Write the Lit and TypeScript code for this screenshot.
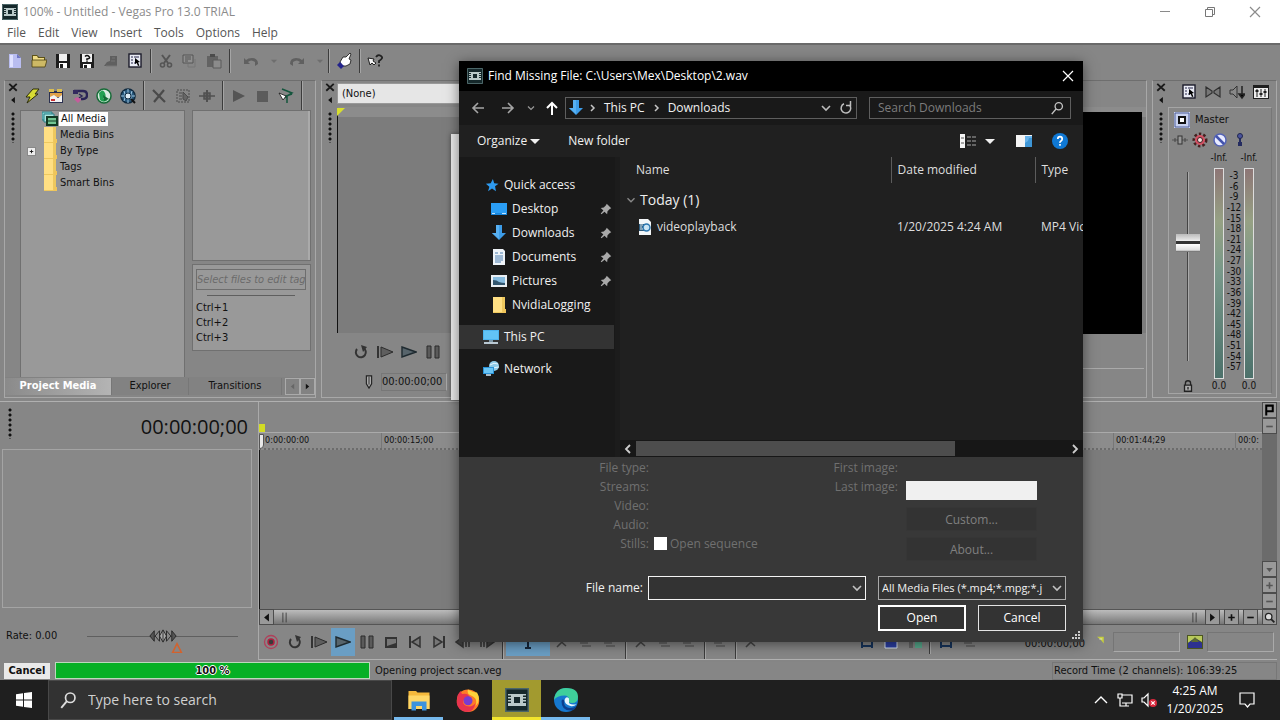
import { LitElement, html, svg, css, nothing, SVGTemplateResult } from "lit";
import { customElement } from "lit/decorators.js";
import { classMap } from "lit/directives/class-map.js";

const glyphs: Record<string, SVGTemplateResult> = {
  app: svg`<rect x="0" y="0" width="16" height="16" fill="#15282b"/><rect x="2" y="4" width="12" height="8" fill="#b9c9c9"/><rect x="6" y="6" width="4" height="4" fill="#15282b"/><path d="M2 5h2v1H2zM2 7h2v1H2zM2 9h2v1H2zM12 5h2v1h-2zM12 7h2v1h-2zM12 9h2v1h-2z" fill="#15282b"/><path d="M.5.5h15v15H.5z" fill="none" stroke="#4c6668"/>`,
  newFile: svg`<path d="M2 1h8l4 4v10H2z" fill="#b9bdf0"/><path d="M10 1l4 4h-4z" fill="#6f76c4"/><path d="M3 2h3v12H3z" fill="#dfe1ff"/>`,
  open: svg`<path d="M1 2h5l2 2h6v10H1z" fill="#5d5218"/><path d="M2 3h4l1 2h6v3H2z" fill="#f0dc86"/><path d="M1 14V7h15l-2 7z" fill="#cdb965" stroke="#4a3f10" stroke-width=".8"/>`,
  save: svg`<path d="M1 1h14v14H1z" fill="#1d1d1d"/><path d="M4 1h8v7H4z" fill="#f2f2f2"/><path d="M4 10h8v5H4z" fill="#fff"/><path d="M5 11h3v4H5z" fill="#1d1d1d"/>`,
  saveAs: svg`<path d="M1 1h14v14H1z" fill="#1d1d1d"/><path d="M3 1h10v8H3z" fill="#f2f2f2"/><path d="M4 11h8v4H4z" fill="#fff"/><path d="M5 12h3v3H5z" fill="#1d1d1d"/><path d="M6 3.5q2-2 4 0t-2 2.5v1M8 7.5v1.2" fill="none" stroke="#111" stroke-width="1.6"/>`,
  render: svg`<path d="M1 13l3-4 3-1V3h7v10z" fill="#5f5f5f"/><path d="M3 13h11M9 5h3M8 8h4" stroke="#777" fill="none"/>`,
  props: svg`<rect x="2" y="1" width="12" height="13" fill="#e9ebf4" stroke="#1a1a2a" stroke-width="1.4"/><path d="M4 4h2M4 7h2M4 10h2M7 4h5M7 10h2" stroke="#26264a"/><path d="M8 5l5 4-2 .5 1.5 3-1.5.5-1.3-3L8 11z" fill="#000"/>`,
  cut: svg`<path d="M4 2l6 8M12 2L6 10" stroke="#555" stroke-width="2" fill="none"/><circle cx="4.500" cy="12" r="2" fill="none" stroke="#555" stroke-width="1.6"/><circle cx="11.500" cy="12" r="2" fill="none" stroke="#555" stroke-width="1.6"/>`,
  copy: svg`<path d="M1 2h10v8H1z" fill="#8f8f8f" stroke="#555"/><path d="M3 4h6M3 6h6M3 8h3" stroke="#555"/><path d="M13 6v8H6v-3" fill="none" stroke="#767676"/>`,
  paste: svg`<path d="M1 3h11v11H1z" fill="#636363"/><path d="M4 1h5v3H4z" fill="#4b4b4b"/><path d="M7 7h8v8H7z" fill="#8b8b8b" stroke="#5b5b5b"/>`,
  undo: svg`<path d="M1 5v6h6L5 9q3-3 7 0v4l3-2q0-6-6-6-4 0-6 2z" fill="#606060"/>`,
  redo: svg`<path d="M15 5v6H9l2-2q-3-3-7 0v4l-3-2q0-6 6-6 4 0 6 2z" fill="#606060"/>`,
  caret: svg`<path d="M3 6h10l-5 5z" fill="currentColor"/>`,
  hand: svg`<path d="M4 9l3-5 3 0 4-4 1 1-2 5 2 1-1 4-4 2H6z" fill="#fff" stroke="#222" stroke-width=".9"/><path d="M1 12l3-3 4 4-3 3z" fill="#23238c"/>`,
  what: svg`<path d="M1 5l6 1-1 2 3 2-2 2-2-2-2 2z" fill="#f4f4f4" stroke="#111" stroke-width=".9"/><path d="M9 4q2-3 5-1t-2 5v2M12 11.500v2" fill="none" stroke="#222" stroke-width="1.800"/>`,
  bolt: svg`<path d="M9 1h6l-4 5h3L3 15l3-6H2z" fill="#d9dc35" stroke="#2b2b0a"/>`,
  photo: svg`<path d="M1 3h14v12H1z" fill="#2a3050"/><path d="M2 5h12v4H2z" fill="#e0a24a"/><path d="M2 9l4-2 4 3 4-3v7H2z" fill="#f3f3f3"/><path d="M3 11h4v2H3z" fill="#c33"/><path d="M1 1h5v3H1zM9 1h5v3H9z" fill="#d9bd52"/>`,
  device: svg`<path d="M2 3h9q4 0 4 4t-4 4H9" fill="none" stroke="#2a2456" stroke-width="2.400"/><path d="M1 2h5v4H1z" fill="#332a5e"/><path d="M7 6l3 2-3 2" fill="none" stroke="#2a2456" stroke-width="1.500"/><path d="M2 11q4-4 7 1l-3 3z" fill="#c55c9c"/>`,
  globe: svg`<circle cx="8" cy="8" r="7" fill="#d9ebe0" stroke="#166b37" stroke-width="1.500"/><path d="M3 5q4-5 6 0t-2 5q4 4 6 1-5 5-9 1z" fill="#23a052"/><path d="M7 7l6 4-5 2z" fill="#126c34"/>`,
  web: svg`<circle cx="8" cy="8" r="7" fill="#28587c" stroke="#112b40" stroke-width="1.600"/><path d="M1 8h14M8 1v14M4 3q3 5 0 10M12 3q-3 5 0 10" stroke="#9fc7e2" fill="none"/><circle cx="8" cy="8" r="3" fill="#dcebf5" stroke="#112b40"/><path d="M11 11l4 4" stroke="#111" stroke-width="2"/>`,
  xdark: svg`<path d="M2 3l12 11M14 3L2 14" stroke="#1a1a1a" stroke-width="3"/>`,
  xgray: svg`<path d="M2 2l12 12M13 2L3 14" stroke="#4a4a4a" stroke-width="2.200"/>`,
  sheet: svg`<rect x="2" y="2" width="12" height="12" fill="none" stroke="#4c4c4c" stroke-dasharray="2 1"/><path d="M4 5h3M4 8h3M4 11h3M8 4l5 5-2 4-3-2z" stroke="#4c4c4c" fill="#666"/>`,
  plugin: svg`<path d="M0 8h16M5 5h6v6H5z" stroke="#505050" fill="#666" stroke-width="1.500"/><path d="M8 2v12" stroke="#505050" stroke-width="2"/>`,
  playGray: svg`<path d="M3 2l12 6-12 6z" fill="#555"/>`,
  stopGray: svg`<path d="M3 3h11v11H3z" fill="#5b5b5b"/>`,
  auto: svg`<path d="M4 1l10 4-8 5M5 9l9-3M9 7v8" stroke="#14553d" stroke-width="1.500" fill="none"/><path d="M1 5l7 3-3 4z" fill="#fff" stroke="#111" stroke-width=".8"/>`,
  loop: svg`<path d="M10.500 4A5 5 0 1 1 4 5" fill="none" stroke="#333" stroke-width="2"/><path d="M8 1l6 2-4 5z" fill="#333"/>`,
  playStart: svg`<path d="M1 2v12" stroke="#333" stroke-width="2"/><path d="M4 3l12 5-12 5z" fill="#5e5e5e" stroke="#2c2c2c"/>`,
  play: svg`<path d="M1 3l14 5-14 5z" fill="#57646b" stroke="#1e2a30" stroke-width="1.400"/>`,
  pause: svg`<path d="M2 2h4v12H2zM10 2h4v12h-4z" fill="#5a5a5a" stroke="#2a2a2a"/>`,
  stop: svg`<path d="M2 3h12v11H2z" fill="#333"/><path d="M4 5h9v4l-9 3z" fill="#777"/>`,
  prev: svg`<path d="M3 2v12" stroke="#333" stroke-width="2"/><path d="M13 3L5 8l8 5z" fill="#777" stroke="#333" stroke-width="1.500"/>`,
  next: svg`<path d="M13 2v12" stroke="#333" stroke-width="2"/><path d="M3 3l8 5-8 5z" fill="#777" stroke="#333" stroke-width="1.500"/>`,
  record: svg`<circle cx="8" cy="8" r="6.500" fill="none" stroke="#b0405a" stroke-width="1.300"/><circle cx="8" cy="8" r="3" fill="#3a3a3a" stroke="#b02040" stroke-width="1.500"/>`,
  frameBack: svg`<path d="M8 3L1 8l7 5zM11 3v10M14 3v10" fill="#444" stroke="#333" stroke-width="1.500"/>`,
  frameFwd: svg`<path d="M8 3l7 5-7 5zM2 3v10M5 3v10" fill="#444" stroke="#333" stroke-width="1.500"/>`,
  cursor: svg`<path d="M8 2v12M5 14h6M5 2h6" stroke="#16263a" stroke-width="2"/>`,
  tool: svg`<path d="M3 4l9 8M12 4l-9 9" stroke="#444" stroke-width="1.600"/>`,
  lines: svg`<path d="M2 5h12M2 9h8M4 12h9" stroke="#606060" stroke-width="1.500"/>`,
  snap: svg`<path d="M3 14V7l5-5 5 5v7M3 12h10" stroke="#16345c" stroke-width="2" fill="none"/>`,
  blue: svg`<path d="M2 5h12v9H2z" fill="#2a3ea4" stroke="#d8e4f0"/>`,
  green: svg`<path d="M2 7h4v7H2z" fill="#666"/><path d="M8 5h7v9H8z" fill="#57a98c"/>`,
  mixer: svg`<path d="M0 1h16v14H0z" fill="#1f1f1f"/><path d="M1 4h14v10H1z" fill="#eee"/><path d="M4 5v8M8 5v8M12 5v8" stroke="#1f1f1f"/><path d="M2.500 7h3M6.500 10h3M10.500 8h3" stroke="#1f1f1f" stroke-width="2"/>`,
  downmix: svg`<path d="M1 3l6 4v2l-6 4zM15 3L9 7v2l6 4z" fill="#777" stroke="#2f2f2f" stroke-width="1.200"/>`,
  dim: svg`<path d="M1 6h3l4-4v12L4 10H1z" fill="#888" stroke="#333"/><path d="M13 2v9M10 10l3 4 3-4z" stroke="#222" stroke-width="1.500"/>`,
  master: svg`<path d="M0 0h16v16H0z" fill="#c9d2ef"/><path d="M1 1h14v14H1z" fill="none" stroke="#4d5c96"/><path d="M5 5h6v6H5z" fill="#fff" stroke="#111" stroke-width="2"/>`,
  fx: svg`<path d="M0 8h16" stroke="#555"/><rect x="6" y="4" width="4" height="8" fill="#999" stroke="#333"/><path d="M3 6v4M13 6v4" stroke="#444"/>`,
  gear: svg`<circle cx="8" cy="8" r="6" fill="none" stroke="#452020" stroke-width="3" stroke-dasharray="2.400 2"/><circle cx="8" cy="8" r="5" fill="#d34f62"/><circle cx="8" cy="8" r="2.500" fill="#f3dede" stroke="#402020"/>`,
  mute: svg`<circle cx="8" cy="8" r="6" fill="#e8ebff" stroke="#5564b5" stroke-width="1.500"/><path d="M4 4l8 8" stroke="#4353ad" stroke-width="2.500"/>`,
  solo: svg`<path d="M8 2v12" stroke="#252c60" stroke-width="2"/><circle cx="8" cy="4" r="2.500" fill="#4a539c" stroke="#20264f"/><path d="M6 10h4v4H6z" fill="#252c60"/>`,
  lock: svg`<path d="M5 8V5a3 3 0 0 1 6 0v3" fill="none" stroke="#222" stroke-width="1.500"/><path d="M4 7h8v7H4z" fill="#aaa" stroke="#222" stroke-width="1.500"/><path d="M8 9v3" stroke="#222" stroke-width="1.500"/>`,
  media: svg`<path d="M0 1h10v8H0z" fill="#7fd0cf" stroke="#2a7f86"/><path d="M2 3h10v8H2z" fill="#a9e5e0" stroke="#2a7f86"/><path d="M4 5h12v10H4z" fill="#123a24"/><path d="M6 7h8v6H6z" fill="#72c592"/><path d="M6 10h8" stroke="#123a24"/>`,
  folder: svg`<path d="M2 0h12v16H2z" fill="#eec85e"/><path d="M2 0h9v15H2z" fill="#ffdf83"/><path d="M12 12h3v4h-3z" fill="#f0c55a"/>`,
  marker: svg`<path d="M5 1h6v9l-3 5-3-5z" fill="#aaa" stroke="#222" stroke-width="1.300"/><path d="M8 2v9" stroke="#222"/>`,
  gridRow: svg`<path d="M0 1h9v9l-4-5z" fill="#c6cf3c"/><path d="M3 4h4" stroke="#eee"/>`,
  image: svg`<path d="M0 1h16v14H0z" fill="#4b5520"/><path d="M1 2h14v6L8 4 1 9z" fill="#b8c95c"/><path d="M1 9l7-5 7 5v5H1z" fill="#2d3190"/><path d="M4 8l4-5 4 5z" fill="#5c6a30"/>`,
  back: svg`<path d="M14 8H3M8 3L3 8l5 5" fill="none" stroke="#a5a5a5" stroke-width="1.600"/>`,
  fwd: svg`<path d="M2 8h11M8 3l5 5-5 5" fill="none" stroke="#a5a5a5" stroke-width="1.600"/>`,
  up: svg`<path d="M8 15V3M3 8l5-5 5 5" fill="none" stroke="#fff" stroke-width="2"/>`,
  chevDown: svg`<path d="M4 6l4 4 4-4" fill="none" stroke="currentColor" stroke-width="1.600"/>`,
  chevRight: svg`<path d="M7 5l3 3-3 3" fill="none" stroke="currentColor" stroke-width="1.500"/>`,
  chevLeft: svg`<path d="M10 4L6 8l4 4" fill="none" stroke="currentColor" stroke-width="1.800"/>`,
  angle: svg`<path d="M6 4l4 4-4 4" fill="none" stroke="currentColor" stroke-width="1.800"/>`,
  refresh: svg`<path d="M6 3.800a4.800 4.800 0 1 0 5.500 1.200" fill="none" stroke="#bdbdbd" stroke-width="1.500"/><path d="M12.500 1v4.500H8" fill="none" stroke="#bdbdbd" stroke-width="1.500"/>`,
  search: svg`<circle cx="10" cy="6" r="4.200" fill="none" stroke="currentColor" stroke-width="1.500"/><path d="M7 9l-5 6" stroke="currentColor" stroke-width="1.700"/>`,
  download: svg`<path d="M5 0h6v8h4l-7 7-7-7h4z" fill="#3c9ce8"/><path d="M5 0h3v14L1 8h4z" fill="#57b0f2"/>`,
  star: svg`<path d="M9 1l1.500 5 5 .5-4 3 1 5.500-4.500-3-4.500 3 1.500-5-4-3.500 5.500-.5z" fill="#2e9bf0"/>`,
  desktop: svg`<path d="M0 2h16v12H0z" fill="#1987dd"/><path d="M0 2h16v10H0z" fill="#2a9df4"/><path d="M1 12h3v1H1zM11 12h4v1h-4z" fill="#bfe4ff"/>`,
  document: svg`<path d="M2 0h10l2 2v14H2z" fill="#eef3f8"/><path d="M4 4h3M4 7h8M4 9h8M4 11h8M4 13h6M9 4h3" stroke="#4c7fb0" stroke-width="1.200"/>`,
  picture: svg`<path d="M0 2h16v12H0z" fill="#e8eef3"/><path d="M2 4h12v8H2z" fill="#86bbdf"/><path d="M2 7q4 0 6 2 3 1 6 1v2H2z" fill="#32566f"/>`,
  pc: svg`<path d="M0 1h16v10H0z" fill="#4db4ee"/><path d="M1 2h14v8H1z" fill="#62c4f6"/><path d="M6 11h4v3H6z" fill="#7e98a8"/><path d="M1 13h14v2H1z" fill="#b9c8d2"/>`,
  network: svg`<circle cx="11" cy="5" r="5" fill="#8fcbe8"/><path d="M7 4q4-3 8-1M8 8q4-2 8-2" stroke="#e6f6ff" fill="none"/><path d="M0 6h11v7H0z" fill="#2a93d8"/><path d="M1 7h9v5H1z" fill="#6ac5f5"/><path d="M3 13h5v2H3z" fill="#a8bac5"/>`,
  pin: svg`<path d="M9 1l6 6-2 1-3 3-.5 4-3.500-3.500L2 15l-1-1 3.500-4L1 6.500 5 6l3-3z" fill="#a9a9a9"/>`,
  videoFile: svg`<path d="M2 0h9l3 3v13H2z" fill="#f3f6f8"/><path d="M2 5h9v7H2z" fill="#2c5878"/><circle cx="9.500" cy="8.500" r="3.500" fill="#c3e2f5" stroke="#2c76ae" stroke-width="1.500"/><path d="M9 6v5M3 6h3M3 8h2M3 10h3" stroke="#dce9f0"/>`,
  views: svg`<path d="M0 1h5v14H0z" fill="#f5f5f5"/><path d="M1 5h3M1 10h3" stroke="#555"/><path d="M7 4h4M12 4h4M7 8h4M12 8h4M7 12h4M12 12h4" stroke="#a8a8a8"/>`,
  pane: svg`<path d="M0 2h16v12H0z" fill="#f4f4f4"/><path d="M9 3h7v11H9z" fill="#66b2ea"/><path d="M9 10l3-2 1-3h3v9H9z" fill="#3e96d6"/>`,
  help: svg`<circle cx="8" cy="8" r="8" fill="#0f78d4"/><path d="M5.800 6q0-2.400 2.200-2.400T10.200 6q0 1.200-1.200 1.900T8 9.800M8 11v1.700" fill="none" stroke="#fff" stroke-width="1.700"/>`,
  win: svg`<path d="M0 2.300l7-1v6.200H0zM8 1.100L16 0v7.500H8zM0 8.500h7v6.200l-7-1zM8 8.500h8V16l-8-1.100z" fill="#fff"/>`,
  explorer: svg`<path d="M1 2h5l1 1h8v11H1z" fill="#f5b93c"/><path d="M1 5h14v9H1z" fill="#ffd767"/><path d="M3 15v-6h10v6h-3v-3H6v3z" fill="#3d93dd"/>`,
  firefox: svg`<circle cx="8" cy="8.500" r="7.500" fill="#ff7b26"/><path d="M8 1q-1 3 2 4 5 2 3 7 4-4 1-9-3 0-6-2z" fill="#ffd23a"/><path d="M1 5q1-2 2-3l1 2q4-1 5 2l-2 1-2 1q-1 3 2 4 4 1 6-2-1 6-6 6-6-1-6.500-6z" fill="#e8344e"/><circle cx="8" cy="8.500" r="3" fill="#7a3bd0"/>`,
  edge: svg`<circle cx="8" cy="8" r="8" fill="#1678cf"/><path d="M0 8q1-8 8-8 8 0 8 6 0 4-4 4-3 0-2-2 0-3-3-3-5 0-7 3z" fill="#3fcf9b"/><path d="M5 9q0 6 6 6 3 0 4-3-3 2-6 1-3-1-2-5-2-1-2 1z" fill="#0c3f8f"/><path d="M7 8q0 3 4 4 2 .5 4-1l-1 0q-3 0-4-1V7q-2-2-3 1z" fill="#e7f6ff"/>`,
  trayUp: svg`<path d="M2 11l6-6 6 6" fill="none" stroke="#fff" stroke-width="1.400"/>`,
  trayNet: svg`<path d="M5 3h10v8H5M1 2h4v4H1zM3 6v8h9M9 11v3" fill="none" stroke="#fff" stroke-width="1.200"/>`,
  trayVol: svg`<path d="M1 6h2l4-4v12L3 10H1z" fill="none" stroke="#fff" stroke-width="1.200"/><circle cx="12" cy="11" r="4" fill="#d8283c"/><path d="M10.300 9.300l3.400 3.400M13.700 9.300l-3.400 3.400" stroke="#fff" stroke-width="1.200"/>`,
  note: svg`<path d="M1 1h14v11h-4l-2.500 3-2.500-3H1z" fill="none" stroke="#fff" stroke-width="1.200"/>`,
  min: svg`<path d="M3 7.500h10" stroke="#8a8a8a"/>`,
  max: svg`<path d="M3.500 5.500h7v7h-7zM5.500 5.500v-2h7v7h-2" fill="none" stroke="#777"/>`,
  close: svg`<path d="M3 3l10 10M13 3L3 13" stroke="currentColor" stroke-width="1.200"/>`,
  triL: svg`<path d="M11 3L5 8l6 5z" fill="currentColor"/>`,
  triR: svg`<path d="M5 3l6 5-6 5z" fill="currentColor"/>`,
  triD: svg`<path d="M4 6h8l-4 5z" fill="currentColor"/>`,
  plus: svg`<path d="M8 4v8M4 8h8" stroke="currentColor" stroke-width="2"/>`,
  minus: svg`<path d="M4 8h8" stroke="currentColor" stroke-width="2"/>`,
  flag: svg`<path d="M4 14V2h8v7H4" fill="none" stroke="#000" stroke-width="2.500"/>`,
  zoom: svg`<circle cx="7" cy="7" r="4" fill="#ddd" stroke="#222" stroke-width="1.500"/><path d="M10 10l4 4" stroke="#222" stroke-width="2.200"/>`,
  split: svg`<path d="M6 2v12M10 2v12" stroke="#333"/>`,
  shuttle: svg`<path d="M6 2L1 8l5 6zM26 2l5 6-5 6z" fill="#555" stroke="#222"/><path d="M12 2L7 8l5 6zM20 2l5 6-5 6z" fill="#888" stroke="#222"/><path d="M16 1l4 7-4 7-4-7z" fill="#aaa" stroke="#222"/><path d="M16 2v12" stroke="#222"/>`,
  warn: svg`<path d="M8 3l5 10H3z" fill="none" stroke="#d2622e" stroke-width="1.700"/>`,
};

const icon = (name: string, size = 16, width = size) => html`<svg
  width=${width}
  height=${size}
  viewBox=${width > size ? "0 0 32 16" : "0 0 16 16"}
  aria-hidden="true"
>${glyphs[name]}</svg>`;

const tool = (name: string, extra = "") =>
  name === "|"
    ? html`<span class="sep"></span>`
    : html`<button class="tool ${extra}" aria-label=${name}>${icon(name)}</button>`;

const base = css`
  * { box-sizing: border-box; }
  svg { display: block; flex: none; }
  button, input, select {
    font: inherit;
    color: inherit;
    background: none;
    border: 0;
    border-radius: 0;
    padding: 0;
    margin: 0;
    appearance: none;
    outline: none;
  }
  .tool {
    width: 24px;
    height: 24px;
    display: flex;
    align-items: center;
    justify-content: center;
    flex: none;
  }
  .sep {
    width: 7px;
    flex: none;
    align-self: stretch;
    display: flex;
    justify-content: center;
  }
  .sep::after { content: ""; border-left: 1px solid #3c3c3c; border-right: 1px solid #a5a5a5; }
`;

const places = [
  { icon: "star", label: "Quick access", kind: "root" },
  { icon: "desktop", label: "Desktop", kind: "pinned" },
  { icon: "download", label: "Downloads", kind: "pinned" },
  { icon: "document", label: "Documents", kind: "pinned" },
  { icon: "picture", label: "Pictures", kind: "pinned" },
  { icon: "folder", label: "NvidiaLogging", kind: "child" },
  { icon: "pc", label: "This PC", kind: "drive current" },
  { icon: "network", label: "Network", kind: "drive" },
];

@customElement("file-dialog")
export class FileDialog extends LitElement {
  static styles = [
    base,
    css`
      :host {
        display: flex;
        flex-direction: column;
        background: #383838;
        color: #f0f0f0;
        font: 12px/16px "Open Sans", "Noto Sans", sans-serif;
        box-shadow: 0 2px 12px rgba(0, 0, 0, 0.5);
      }
      .title { display: flex; align-items: center; gap: 5px; height: 30px; padding: 0 7px 0 8px; background: #000; color: #fff; }
      .title span { flex: 1; }
      .nav { display: flex; align-items: center; height: 34px; padding: 0 12px 0 11px; background: #191919; }
      .nav .arrows { display: flex; align-items: center; width: 95px; color: #999; gap: 14px; }
      .nav .arrows .mini { margin: 0 -7px 0 -5px; }
      .nav .arrows .mini svg { width: 12px; }
      .address { display: flex; align-items: center; flex: 1; height: 22px; border: 1px solid #5e5e5e; padding: 0 0 0 2px; color: #c5c5c5; }
      .address button { color: #f0f0f0; margin: 0 3px 0 4px; }
      .address .gap { flex: 1; }
      .address .icon { margin: 0; color: #bbb; width: 20px; display: flex; justify-content: center; }
      .find { display: flex; align-items: center; width: 202px; height: 22px; border: 1px solid #5e5e5e; margin-left: 12px; padding: 0 6px 0 8px; color: #c5c5c5; }
      .find input { flex: 1; min-width: 0; }
      .find input::placeholder { color: #7c7c7c; opacity: 1; }
      .find svg { width: 14px; }
      .commands { display: flex; align-items: center; height: 32px; padding: 0 15px 0 18px; background: #202020; gap: 25px; }
      .commands button { display: flex; align-items: center; }
      .commands .wide { margin-left: auto; gap: 6px; margin-right: -7px; }
      .commands .last { margin-left: -5px; }
      .body { display: flex; flex: 1; min-height: 0; background: #202020; }
      nav { width: 156px; background: #191919; padding: 16px 1px 0 0; }
      nav ul { list-style: none; margin: 0; padding: 0; }
      nav li { display: flex; }
      nav button { display: flex; align-items: center; gap: 5px; height: 24px; width: 100%; padding: 0 0 0 32px; text-align: left; }
      nav .label { flex: 1; }
      nav .root button { padding-left: 25px; gap: 4px; }
      nav .root svg:first-child { height: 14px; }
      nav .drive { padding-top: 8px; }
      nav .drive button { padding-left: 24px; }
      nav .current button { background: #333; }
      nav .pin { width: 14px; display: flex; }
      nav .pin svg { width: 12px; }
      .files { flex: 1; min-width: 0; display: flex; flex-direction: column; border-left: 5px solid #1c1c1c; }
      .scroller { flex: 1; overflow: hidden; }
      table { table-layout: fixed; width: 100%; border-collapse: collapse; color: #dedede; }
      .name { width: 271px; }
      .date { width: 144px; }
      th { height: 26px; font-weight: 400; text-align: left; padding: 0 0 0 6px; border-right: 1px solid #5c5c5c; }
      th:first-child { padding-left: 16px; }
      th:last-child { border-right: 0; }
      td { padding: 0 0 0 6px; white-space: nowrap; overflow: hidden; height: 20px; }
      .group td { height: 34px; font-size: 14px; color: #eee; padding-left: 4px; }
      .row { display: flex; align-items: center; gap: 2px; color: #888; }
      .row span { color: #eee; }
      td .file { display: flex; align-items: center; gap: 4px; padding-left: 11px; }
      .hscroll { display: flex; align-items: center; height: 17px; background: #171717; color: #ccc; }
      .hscroll .thumb { height: 15px; background: #4d4d4d; flex: 319; }
      .hscroll .rest { flex: 112; }
      .hscroll button { width: 16px; display: flex; }
      .info { display: flex; color: #707070; padding: 1px 46px 0 0; line-height: 19px; height: 106px; }
      .facts { width: 190px; text-align: right; }
      .facts p, .frames p { margin: 0; }
      .sequence { display: flex; align-self: flex-start; align-items: center; gap: 3px; margin: 76px 0 0 5px; }
      .sequence input { width: 13px; height: 13px; background: #fff; }
      .frames { margin-left: auto; text-align: right; }
      .range { display: flex; flex-direction: column; align-self: flex-start; width: 131px; margin-left: 8px; padding-top: 23px; }
      .range select { height: 19px; background: #f0f0f0; margin-bottom: 7px; }
      .range button { height: 24px; background: #333; margin-bottom: 6px; color: #808080; border: 1px solid #363636; }
      .choose { display: grid; grid-template-columns: 184px 1fr 188px; padding: 13px 17px 11px 0; column-gap: 12px; row-gap: 5px; align-items: center; }
      .choose .label { text-align: right; }
      .choose .combo { margin-left: -7px; }
      .combo { position: relative; display: flex; }
      .combo input, .combo select { width: 100%; height: 24px; border: 1px solid #f4f4f4; padding: 0 18px 0 3px; background: #333; }
      .combo .kind { border-color: #aaa; font-size: 11px; }
      .combo .mark { position: absolute; right: 1px; top: 4px; color: #c2c2c2; pointer-events: none; }
      .choose .filter { margin-left: 0; }
      .actions { grid-column: 3; display: grid; grid-template-columns: 1fr 1fr; gap: 12px; }
      .actions button { height: 26px; border: 1px solid #e4e4e4; background: #333; color: #fff; }
      .actions .primary { border: 2px solid #fff; }
      .grip { position: absolute; right: 2px; bottom: 2px; }
    `,
  ];

  render() {
    return html`
      <header class="title">${icon("app")}<span>Find Missing File: C:\\Users\\Mex\\Desktop\\2.wav</span><button aria-label="Close">${icon("close")}</button></header>
      <div class="nav">
        <div class="arrows">
          <button aria-label="Back">${icon("back")}</button><button aria-label="Forward">${icon("fwd")}</button><button class="mini" aria-label="Recent">${icon("chevDown")}</button><button aria-label="Up">${icon("up")}</button>
        </div>
        <div class="address">${icon("download")}${icon("chevRight")}<button>This PC</button>${icon("chevRight")}<button>Downloads</button><span class="gap"></span><button class="icon" aria-label="History">${icon("chevDown")}</button><button class="icon" aria-label="Refresh">${icon("refresh")}</button></div>
        <div class="find"><input aria-label="Search Downloads" placeholder="Search Downloads" />${icon("search")}</div>
      </div>
      <div class="commands">
        <button>Organize${icon("caret")}</button><button>New folder</button>
        <button class="wide" aria-label="Views">${icon("views")}${icon("caret")}</button>
        <button aria-label="Preview pane">${icon("pane")}</button>
        <button class="last" aria-label="Help">${icon("help")}</button>
      </div>
      <div class="body">
        <nav><ul>
          ${places.map((p) => html`<li class=${p.kind}><button>${icon(p.icon)}<span class="label">${p.label}</span>${p.kind === "pinned" ? html`<span class="pin">${icon("pin")}</span>` : nothing}</button></li>`)}
        </ul></nav>
        <div class="files">
          <div class="scroller">
            <table>
              <thead><tr><th class="name">Name</th><th class="date">Date modified</th><th>Type</th></tr></thead>
              <tbody>
                <tr class="group"><td colspan="3"><div class="row">${icon("chevDown", 14)}<span>Today (1)</span></div></td></tr>
                <tr><td><div class="file">${icon("videoFile")}videoplayback</div></td><td>1/20/2025 4:24 AM</td><td>MP4 Vic</td></tr>
              </tbody>
            </table>
          </div>
          <div class="hscroll"><button aria-label="Scroll left">${icon("chevLeft")}</button><span class="thumb"></span><span class="rest"></span><button aria-label="Scroll right">${icon("angle")}</button></div>
        </div>
      </div>
      <div class="info">
        <div class="facts"><p>File type:</p><p>Streams:</p><p>Video:</p><p>Audio:</p><p>Stills:</p></div>
        <label class="sequence"><input type="checkbox" />Open sequence</label>
        <div class="frames"><p>First image:</p><p>Last image:</p></div>
        <div class="range"><select aria-label="Last image"></select><button>Custom...</button><button>About...</button></div>
      </div>
      <div class="choose">
        <label class="label" for="file">File name:</label>
        <div class="combo"><input id="file" /><span class="mark">${icon("chevDown")}</span></div>
        <div class="combo filter"><select class="kind" aria-label="File type"><option>All Media Files (*.mp4;*.mpg;*.j</option></select><span class="mark">${icon("chevDown")}</span></div>
        <div class="actions"><button class="primary">Open</button><button>Cancel</button></div>
      </div>
      <svg class="grip" width="10" height="10" viewBox="0 0 10 10"><path d="M7 1h2v2H7zM4 4h2v2H4zM7 4h2v2H7zM1 7h2v2H1zM4 7h2v2H4zM7 7h2v2H7z" fill="#ccc" /></svg>
    `;
  }
}

const ruler = ["0:00:00:00", "00:00:15;00", "00:00:29;29", "00:00:44;29", "00:00:59;28", "00:01:15:00", "00:01:29;29", "00:01:44;29", "00:0:"];
const levels = Array.from({ length: 19 }, (_, i) => (i + 1) * 3);

@customElement("app-root")
export class AppRoot extends LitElement {
  static styles = [
    base,
    css`
      :host {
        display: flex;
        flex-direction: column;
        position: relative;
        height: 100vh;
        overflow: hidden;
        background: #868686;
        color: #111;
        font: 11px/16px "DejaVu Sans Condensed", "DejaVu Sans", sans-serif;
      }
      .ui { font: 12px/16px "Open Sans", "Noto Sans", sans-serif; }
      .title { display: flex; align-items: center; height: 23px; padding: 0 3px 0 2px; background: #fff; color: #8b8b8b; }
      .title span { flex: 1; margin-left: 5px; }
      .title button { width: 45px; display: flex; justify-content: center; }
      .menu { display: flex; align-items: center; gap: 12px; height: 20px; padding: 0 7px; background: #fff; color: #555; }
      .toolbar { display: flex; align-items: center; height: 36px; padding: 2px 3px 4px; border-top: 2px solid #6a6a6a; flex: none; }
      .toolbar .sep { margin: 2px 0; }
      .toolbar .wide { width: 36px; }
      .toolbar .thin { width: 10px; color: #6e6e6e; }
      .toolbar .thin svg { width: 10px; }
      .docks { display: flex; height: 319px; flex: none; padding: 1px 3px 0 4px; gap: 5px; }
      .dock { display: flex; border: 1px solid #a8a8a8; border-top-color: #6e6e6e; }
      .dots { display: flex; flex-direction: column; align-items: center; width: 15px; padding-top: 1px; flex: none; }
      .dots svg { height: 10px; width: 10px; margin-bottom: 3px; }
      .dots i { width: 4px; height: 31px; margin-top: 4px; background: radial-gradient(circle at 2px 2px, #111 1px, transparent 2px) 0 0 / 4px 5px; }
      .media { width: 312px; flex-direction: column; padding-bottom: 2px; }
      .media .upper { display: flex; flex: 1; min-height: 0; }
      .stack { flex: 1; display: flex; flex-direction: column; min-width: 0; }
      .row { display: flex; align-items: center; }
      .stack > .row { height: 29px; }
      .panes { display: flex; flex: 1; gap: 7px; padding-right: 4px; }
      .tree { width: 165px; background: #999; border: 1px solid #707070; border-bottom: 0; margin: 0; padding: 0; list-style: none; }
      .tree li { display: flex; align-items: center; height: 16px; padding-left: 21px; position: relative; }
      .tree span { padding: 0 2px; }
      .tree .current { background: #fff; line-height: 14px; margin-left: 1px; }
      .tree .expand { position: absolute; left: 6px; top: 4px; width: 9px; height: 9px; background: #eee; border: 1px solid #888; }
      .tree .expand svg { width: 7px; height: 7px; }
      .side { flex: 1; display: flex; flex-direction: column; gap: 3px; padding-bottom: 26px; min-width: 0; }
      .list { flex: 1; background: #999; border: 1px solid #707070; box-shadow: inset -2px 0 #aaa; }
      .tags { height: 87px; background: #999; border: 1px solid #707070; padding: 4px 4px 0 3px; line-height: 15px; }
      .tags input { width: 100%; height: 21px; border: 1px solid #6e6e6e; text-align: center; }
      .tags input::placeholder { color: #6b6b6b; font-style: italic; opacity: 1; }
      .tags hr { border: 0; border-top: 1px solid #5f5f5f; margin: 5px 11px 4px; }
      .tabs { display: flex; height: 18px; align-items: center; background: #828282; }
      .tabs button { height: 17px; width: 77px; border-right: 1px solid #777; }
      .tabs .active { width: 107px; background: linear-gradient(90deg, #8a8a8a, #b4b4b4); color: #fff; font-weight: 700; }
      .tabs .trans { width: 93px; }
      .tabs .arrow { width: 15px; display: flex; align-items: center; justify-content: center; border: 1px solid #aaa; }
      .tabs .arrow svg { width: 9px; }
      .tabs .off { color: #666; margin-left: auto; }
      .trimmer { flex: 1; position: relative; }
      .trimmer select { height: 21px; background: #e6e6e6; padding: 0 4px; margin-top: 2px; border: 1px solid #999; width: 50%; }
      .track { flex: 1; border-left: 1px solid #111; background: #7c7c7c; border-top: 10px solid #8c8c8c; margin-top: 3px; margin-bottom: 4px; position: relative; }
      .start { position: absolute; left: -1px; top: -9px; border-top: 8px solid #d8df2d; border-right: 8px solid transparent; }
      .stack > .line { height: 30px; padding-left: 12px; }
      .stack > .code { padding-left: 25px; }
      .line .time { padding-right: 4px; border: 1px solid #777; border-right-color: #aaa; margin-left: 5px; }
      .screen { position: absolute; right: 4px; top: 31px; width: 50%; height: 222px; background: #000; }
      .rule { position: absolute; right: 2px; width: 50%; bottom: 28px; border-top: 1px solid #aaa; }
      .audio { width: 125px; }
      .audio .stack { padding-right: 4px; }
      .audio .icons { height: 26px; padding: 0 0 5px 9px; }
      .strip { flex: 1; border: 1px solid #a5a5a5; border-right-color: #777; display: flex; flex-direction: column; padding: 0 5px 2px 3px; margin-bottom: 3px; }
      .strip .name { height: 24px; gap: 5px; padding-left: 2px; }
      .strip .fx { height: 16px; gap: 4px; }
      .heads, .foot { display: grid; grid-template-columns: 32px 30px 30px; align-items: center; justify-items: center; font-size: 10px; }
      .heads { height: 20px; }
      .foot { height: 12px; line-height: 12px; }
      .heads span:first-child { grid-column: 2; }
      .meters { flex: 1; display: flex; min-height: 0; }
      .fader { width: 32px; display: flex; flex-direction: column; align-items: center; }
      .fader .rail { flex: 1; width: 2px; background: #444; border-right: 1px solid #aaa; margin: 4px 0 18px; position: relative; }
      .fader .knob { position: absolute; left: -11px; top: 62px; width: 24px; height: 18px; background: linear-gradient(#bbb, #eee 40%, #333 41%, #333 55%, #fff 56%, #ddd 90%, #555); }
      .meter { width: 10px; border: 1px solid #ddd; background: linear-gradient(#8d7676, #96a184 25%, #78988a 50%, #4d716b); margin-left: 10px; }
      .meter + .scale + .meter { margin-left: 0; }
      .scale { width: 20px; display: flex; flex-direction: column; padding: 3px 0 6px; font-size: 10px; line-height: 10px; }
      .scale span { flex: 1; display: flex; justify-content: center; }
      .scale span::before { content: "-"; }
      .timeline { display: flex; flex: 1; min-height: 0; border-top: 1px solid #b0b0b0; margin: 3px 0 0; padding: 0 3px 0 0; }
      .tracks { width: 258px; flex: none; display: flex; flex-direction: column; }
      .clock { display: flex; height: 47px; align-items: center; font: 20px/24px "Open Sans", "Noto Sans", sans-serif; padding: 2px 10px 0 2px; justify-content: space-between; }
      .clock .dots i { margin-top: 0; margin-bottom: 8px; }
      .headers { flex: 1; border: 1px solid #a4a4a4; background: #888; margin: 0 6px 0 2px; }
      .rate { display: flex; height: 52px; padding: 4px 20px 0 6px; align-items: center; gap: 30px; }
      .shuttle { flex: 1; position: relative; display: flex; justify-content: center; align-items: center; }
      .shuttle::before { content: ""; position: absolute; left: 0; right: 0; top: 7px; border-top: 1px solid #5f5f5f; }
      .shuttle svg { position: relative; }
      .shuttle .warn { position: absolute; top: 12px; left: 83px; }
      .lanes { flex: 1; min-width: 0; display: flex; flex-direction: column; border-left: 1px solid #aaa; }
      .area { display: flex; flex: 1; min-height: 0; }
      .canvas { flex: 1; min-width: 0; display: flex; flex-direction: column; position: relative; }
      .markers { height: 31px; border-bottom: 1px solid #aaa; }
      .ruler { display: flex; height: 17px; overflow: hidden; border-bottom: 2px dotted #6c6c6c; font-size: 9px; line-height: 15px; background: #8c8c8c; }
      .ruler span { flex: none; width: 122px; padding-left: 2px; border-left: 1px solid #777; white-space: nowrap; }
      .ruler span:first-child { padding-left: 5px; }
      .ruler span:last-child { flex: 1; width: auto; }
      .empty { flex: 1; background: #7c7c7c; border-left: 1px solid #111; }
      .flagmark { position: absolute; left: 0; top: 22px; width: 6px; height: 8px; background: #d2dc25; }
      .playhead { position: absolute; left: 0; top: 32px; width: 5px; height: 15px; background: #e8e8e8; border: 1px solid #555; border-radius: 0 0 4px 0; }
      .vscroll { width: 15px; display: flex; flex-direction: column; background: #6b6b6b; flex: none; }
      .vscroll button, .hscroll button { border: 1px solid #4c4c4c; background: #999; width: 15px; height: 16px; display: flex; align-items: center; justify-content: center; flex: none; }
      .vscroll button { color: #555; }
      .vscroll .mid { flex: 1; }
      .vscroll svg, .hscroll svg { width: 13px; height: 13px; }
      .hscroll { display: flex; height: 16px; background: linear-gradient(#bcbcbc, #777); border: 1px solid #555; border-width: 1px 0; align-items: center; gap: 4px; flex: none; }
      .hscroll .mid { flex: 1; }
      .transport { display: flex; height: 35px; align-items: center; border-bottom: 1px solid #b0b0b0; overflow: hidden; flex: none; }
      .transport .on { background: #6a9ec4; height: 28px; }
      .transport .edit { width: 44px; }
      .transport .right { margin-left: auto; display: flex; align-items: center; }
      .transport .box { height: 20px; width: 67px; border: 1px solid #757575; border-right-color: #aaa; border-bottom-color: #aaa; margin-right: 3px; }
      .transport .snaps { display: flex; width: 170px; }
      .transport .time { margin-top: 4px; }
      .transport .mark { display: flex; width: 24px; justify-content: flex-end; margin-right: 4px; }
      .transport .mark svg { width: 12px; }
      .status { display: flex; align-items: center; height: 20px; padding: 1px 3px 0 4px; gap: 5px; flex: none; }
      .status .cancel { background: #e9e9e9; font-weight: 700; width: 46px; height: 16px; line-height: 16px; }
      .bar { width: 315px; height: 17px; background: #06b025; border: 1px solid #bcd8bc; text-align: center; font-weight: 700; line-height: 15px; text-shadow: 1px 0 #fff, -1px 0 #fff, 0 1px #fff, 0 -1px #fff; }
      .rec { margin-left: auto; width: 225px; padding-left: 1px; border: 1px solid #777; height: 18px; }
      .taskbar { display: flex; align-items: stretch; height: 40px; background: #1f1f1f; color: #fff; flex: none; z-index: 2; }
      .taskbar button { width: 49px; display: flex; align-items: center; justify-content: center; border-bottom: 3px solid transparent; border-top: 3px solid transparent; }
      .taskbar .begin { width: 48px; }
      .taskbar .open { border-bottom-color: #76b9ed; }
      .taskbar .current { background: #a29a2f; border-bottom-color: #f2e52c; border-top-color: #a29a2f; }
      .search { display: flex; align-items: center; width: 344px; gap: 11px; padding: 0 12px 0 10px; background: #323232; border: 1px solid #484848; margin-right: 2px; color: #ddd; }
      .search input { flex: 1; font: 14px/20px "Open Sans", "Noto Sans", sans-serif; }
      .search input::placeholder { color: #d0d0d0; opacity: 1; }
      .tray { margin-left: auto; display: flex; align-items: center; gap: 8px; padding-right: 25px; }
      .tray .when { text-align: center; line-height: 18px; width: 60px; margin-right: 6px; white-space: nowrap; }
      .splash { position: absolute; left: 451px; top: 134px; width: 200px; height: 266px; background: #e9e9e9; box-shadow: 0 0 5px rgba(0, 0, 0, 0.4); }
      .dialog { position: absolute; left: 459px; top: 61px; width: 624px; height: 581px; }
    `,
  ];

  private handle() {
    return html`<div class="dots">${icon("xdark", 10)}${icon("triL", 10)}<i></i></div>`;
  }

  render() {
    const main = ["newFile", "open", "save", "saveAs", "render", "props", "|", "cut", "copy", "paste", "|"];
    const bins = ["Media Bins", "By Type", "Tags", "Smart Bins"];
    return html`
      <header class="title ui">${icon("app")}<span>100% - Untitled - Vegas Pro 13.0 TRIAL</span>
        <button aria-label="Minimize">${icon("min")}</button><button aria-label="Restore">${icon("max")}</button><button aria-label="Close">${icon("close")}</button>
      </header>
      <nav class="menu ui">${["File", "Edit", "View", "Insert", "Tools", "Options", "Help"].map((m) => html`<button>${m}</button>`)}</nav>
      <div class="toolbar">
        ${main.map((n) => tool(n))}${tool("undo", "wide")}${tool("caret", "thin")}${tool("redo", "wide")}${tool("caret", "thin")}${["|", "hand", "|", "what"].map((n) => tool(n))}
      </div>
      <div class="docks">
        <section class="dock media">
          <div class="upper">
            ${this.handle()}
            <div class="stack">
              <div class="row">${["bolt", "photo", "device", "globe", "web", "|", "xgray", "sheet", "plugin", "|", "playGray", "stopGray", "auto", "|"].map((n) => tool(n))}</div>
              <div class="panes">
                <ul class="tree">
                  <li>${icon("media")}<span class="current">All Media</span></li>
                  ${bins.map((b) => html`<li>${b === "By Type" ? html`<button class="expand" aria-label="Expand">${icon("plus", 7)}</button>` : nothing}${icon("folder")}<span>${b}</span></li>`)}
                </ul>
                <div class="side">
                  <div class="list"></div>
                  <div class="tags"><input aria-label="Tags" placeholder="Select files to edit tag" /><hr /><div>Ctrl+1</div><div>Ctrl+2</div><div>Ctrl+3</div></div>
                </div>
              </div>
            </div>
          </div>
          <div class="tabs"><button class="active">Project Media</button><button>Explorer</button><button class="trans">Transitions</button><button class="arrow off" aria-label="Previous tabs">${icon("triL", 9)}</button><button class="arrow" aria-label="Next tabs">${icon("triR", 9)}</button></div>
        </section>
        <section class="dock trimmer">
          ${this.handle()}
          <div class="stack">
            <select aria-label="Trimmer clip"><option>(None)</option></select>
            <div class="track"><span class="start"></span></div>
            <div class="row line">${["loop", "playStart", "play", "pause"].map((n) => tool(n))}</div>
            <div class="row line code">${icon("marker", 14)}<span class="time">00:00:00;00</span></div>
          </div>
          <div class="screen"></div><div class="rule"></div>
        </section>
        <section class="dock audio">
          ${this.handle()}
          <div class="stack">
            <div class="row icons">${["props", "downmix", "dim", "mixer"].map((n) => tool(n))}</div>
            <div class="strip">
              <div class="row name">${icon("master")}<span>Master</span></div>
              <div class="row fx">${["fx", "gear", "mute", "solo"].map((n) => icon(n))}</div>
              <div class="heads"><span>-Inf.</span><span>-Inf.</span></div>
              <div class="meters">
                <div class="fader"><div class="rail"><span class="knob"></span></div></div>
                <div class="meter"></div><div class="scale">${levels.map((l) => html`<span>${l}</span>`)}</div><div class="meter"></div>
              </div>
              <div class="foot">${icon("lock", 14)}<span>0.0</span><span>0.0</span></div>
            </div>
          </div>
        </section>
      </div>
      <section class="timeline">
        <div class="tracks">
          <div class="clock"><div class="dots"><i></i></div><span>00:00:00;00</span></div>
          <div class="headers"></div>
          <div class="rate"><span>Rate: 0.00</span><div class="shuttle">${icon("shuttle", 14, 28)}<span class="warn">${icon("warn", 14)}</span></div></div>
        </div>
        <div class="lanes">
          <div class="area">
            <div class="canvas">
              <div class="markers"></div>
              <div class="ruler">${ruler.map((t) => html`<span>${t}</span>`)}</div>
              <div class="empty"></div>
              <span class="flagmark"></span><span class="playhead"></span>
            </div>
            <div class="vscroll">
              <button aria-label="Markers">${icon("flag")}</button><button aria-label="Scroll up">${icon("minus")}</button><span class="mid"></span>
              <button aria-label="Scroll down">${icon("triD")}</button><button aria-label="Zoom in height">${icon("plus")}</button><button aria-label="Zoom out height">${icon("minus")}</button>
            </div>
          </div>
          <div class="hscroll">
            <button aria-label="Scroll left">${icon("triL")}</button>${icon("split")}<span class="mid"></span>${icon("split")}<button aria-label="Scroll right">${icon("triR")}</button><button aria-label="Zoom in">${icon("plus")}</button><button aria-label="Zoom out">${icon("minus")}</button><button aria-label="Zoom">${icon("zoom")}</button>
          </div>
          <div class="transport">
            ${["record", "loop", "playStart"].map((n) => tool(n))}${tool("play", "on")}${["pause", "stop", "prev", "next", "frameBack", "frameFwd", "|"].map((n) => tool(n))}${tool("cursor", "on edit")}${["tool", "lines", "lines", "|", "tool", "lines", "lines", "|", "lines", "|", "tool"].map((n) => tool(n))}
            <div class="right"><span class="snaps">${["snap", "blue", "green", "|", "snap", "lines"].map((n) => tool(n))}</span><span class="time">00:00:00;00</span><span class="mark">${icon("gridRow", 12)}</span><span class="box"></span>${tool("image")}<span class="box"></span></div>
          </div>
        </div>
      </section>
      <footer class="status"><button class="cancel">Cancel</button><div class="bar">100 %</div><span>Opening project scan.veg</span><span class="rec">Record Time (2 channels): 106:39:25</span></footer>
      <div class="splash"></div>
      <file-dialog class="dialog" role="dialog" aria-label="Find Missing File"></file-dialog>
      <div class="taskbar ui">
        <button class="begin" aria-label="Start">${icon("win")}</button>
        <div class="search">${icon("search", 18)}<input aria-label="Type here to search" placeholder="Type here to search" /></div>
        ${["explorer", "firefox", "app", "edge"].map((n) => html`<button aria-label=${n} class=${classMap({ open: n === "explorer" || n === "edge", current: n === "app" })}>${icon(n, 24)}</button>`)}
        <div class="tray">${icon("trayUp")}${icon("trayNet")}${icon("trayVol")}<span class="when">4:25 AM<br />1/20/2025</span>${icon("note")}</div>
      </div>
    `;
  }
}
